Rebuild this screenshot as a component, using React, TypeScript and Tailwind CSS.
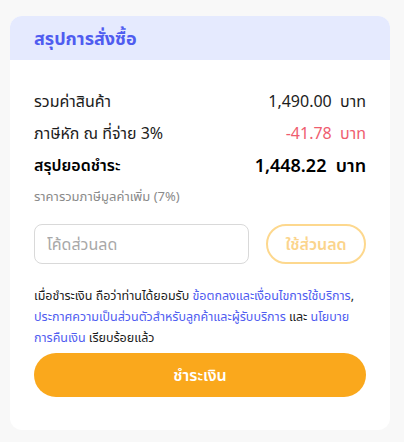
import React from 'react';

const font = { fontFamily: '"Noto Sans", "Noto Sans Thai", sans-serif' };

const Row: React.FC<{ label: string; amount: string; className?: string; amountClass?: string }> = ({
  label,
  amount,
  className = '',
  amountClass = '',
}) => (
  <div className={`flex items-center justify-between ${className}`}>
    <span>{label}</span>
    <span className={amountClass}>
      {amount}&nbsp;&nbsp;บาท
    </span>
  </div>
);

export default function App() {
  return (
    <div className="min-h-[442px] w-[404px] bg-[#f8f8f8] px-[10px] pt-4" style={font}>
      <div className="w-[380px] overflow-hidden rounded-xl bg-white">
        <div className="flex h-11 items-center bg-[#e5eafe] px-6">
          <h2 className="text-[18px] font-bold text-[#4f5cf0]">สรุปการสั่งซื้อ</h2>
        </div>
        <div className="px-6 pt-[25px] pb-[33px]">
          <Row label="รวมค่าสินค้า" amount="1,490.00" className="h-8 text-[16px] text-[#1c1c1c]" />
          <Row
            label="ภาษีหัก ณ ที่จ่าย 3%"
            amount="-41.78"
            className="h-8 text-[16px] text-[#1c1c1c]"
            amountClass="text-[#ef5d6f]"
          />
          <Row
            label="สรุปยอดชำระ"
            amount="1,448.22"
            className="h-8 text-[16px] font-semibold text-black"
            amountClass="text-[18px]"
          />
          <p className="mt-[6px] text-[13px] text-[#8a8a8a]">ราคารวมภาษีมูลค่าเพิ่ม (7%)</p>

          <div className="mt-[17px] flex items-center gap-[17px]">
            <input
              className="h-10 w-[215px] rounded-lg border border-[#d9d9d9] px-3 text-[16px] outline-none placeholder:text-[#a8a8a8]"
              placeholder="โค้ดส่วนลด"
            />
            <button className="h-10 flex-1 rounded-full border-2 border-[#fdd88e] text-[16px] font-semibold text-[#fbd48c]">
              ใช้ส่วนลด
            </button>
          </div>

          <div className="mt-[21px] flex flex-col text-[12.5px] leading-[21px] whitespace-nowrap text-[#1c1c1c]">
            <span>
              เมื่อชำระเงิน ถือว่าท่านได้ยอมรับ{' '}
              <span className="text-[#4f5cf0]">ข้อตกลงและเงื่อนไขการใช้บริการ</span>,
            </span>
            <span>
              <span className="text-[#4f5cf0]">ประกาศความเป็นส่วนตัวสำหรับลูกค้าและผู้รับบริการ</span> และ{' '}
              <span className="text-[#4f5cf0]">นโยบาย</span>
            </span>
            <span>
              <span className="text-[#4f5cf0]">การคืนเงิน</span> เรียบร้อยแล้ว
            </span>
          </div>

          <button className="mt-[5px] h-11 w-full rounded-full bg-[#faa81c] text-[16px] font-semibold text-white">
            ชำระเงิน
          </button>
        </div>
      </div>
    </div>
  );
}
